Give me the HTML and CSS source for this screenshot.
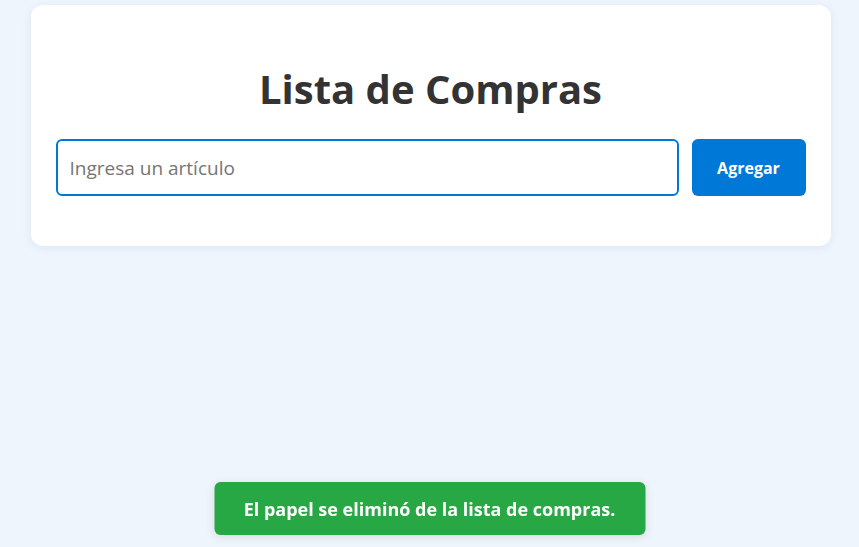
FILE: index.html
```html
<!DOCTYPE html>
<html lang="es">
<head>
<meta charset="utf-8">
<title>Lista de Compras</title>
<link rel="stylesheet" href="styles.css">
</head>
<body>
<main class="card">
  <h1 class="title">Lista de Compras</h1>
  <form class="add-form">
    <input class="item-input" type="text" placeholder="Ingresa un artículo">
    <button class="add-btn" type="button">Agregar</button>
  </form>
  <ul class="items"></ul>
</main>
<div class="toast">El papel se eliminó de la lista de compras.</div>
</body>
</html>
```

FILE: styles.css
```css
* { box-sizing: border-box; }
html, body { height: 100%; }
body {
  margin: 0;
  background: #eef5fd;
  font-family: "Comic Sans MS", "Open Sans", sans-serif;
  color: #333;
  padding: 5px 0 0 2px;
}
.card {
  width: 800px;
  margin: 0 auto;
  background: #fff;
  border-radius: 12px;
  box-shadow: 0 2px 10px rgba(0, 60, 140, 0.08);
  padding: 56px 25px 25px;
}
.title {
  margin: 0 0 22px;
  text-align: center;
  font-size: 40px;
  line-height: 56px;
  font-weight: 700;
  color: #333;
}
.add-form {
  display: flex;
  gap: 13px;
  margin-bottom: 25px;
}
.item-input {
  flex: 1;
  height: 57px;
  border: 2px solid #0078d7;
  border-radius: 6px;
  padding: 0 12px;
  font-family: inherit;
  font-size: 19px;
  color: #333;
  outline: none;
}
.item-input::placeholder { color: #757575; }
.add-btn {
  width: 114px;
  height: 57px;
  border: none;
  border-radius: 6px;
  background: #0078d7;
  color: #fff;
  font-family: inherit;
  font-size: 16px;
  font-weight: 700;
}
.items { margin: 0; padding: 0; list-style: none; }
.toast {
  position: fixed;
  left: 50%;
  bottom: 12px;
  transform: translateX(-50%);
  width: 431px;
  height: 53px;
  display: flex;
  align-items: center;
  justify-content: center;
  background: #28a745;
  color: #fff;
  border-radius: 6px;
  font-size: 18px;
  font-weight: 700;
  box-shadow: 0 2px 10px rgba(0, 0, 0, 0.1);
}
```
